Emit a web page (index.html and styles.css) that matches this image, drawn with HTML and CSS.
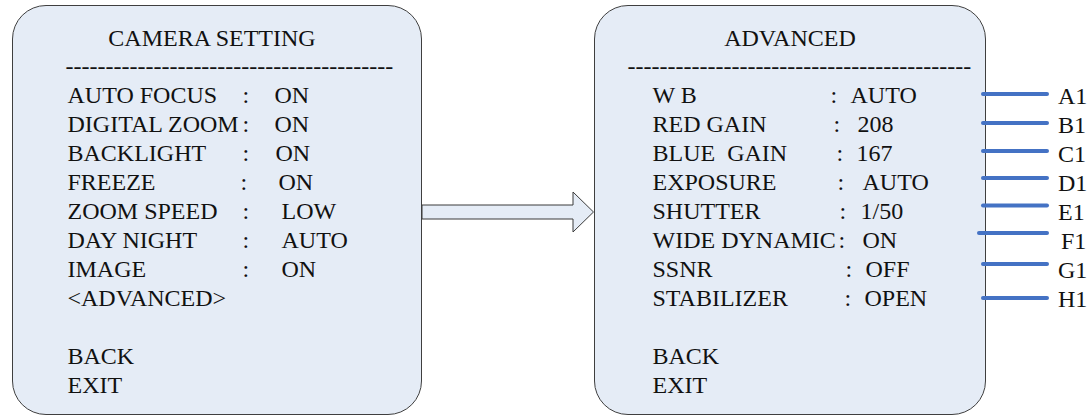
FILE: index.html
```html
<!DOCTYPE html>
<html>
<head>
  <title>Camera Setting Menu</title>
  <link rel="stylesheet" href="styles.css">
</head>
<body>
  <div id="diagram">
    <div class="menu menu-camera">
      <div class="menu-title">CAMERA SETTING</div>
      <div class="menu-rule">-----------------------------------------</div>
      <div class="menu-list">
        <div class="row"><span class="key">AUTO FOCUS</span><span class="sep">:</span><span class="val">ON</span></div>
        <div class="row"><span class="key">DIGITAL ZOOM</span><span class="sep">:</span><span class="val">ON</span></div>
        <div class="row"><span class="key">BACKLIGHT</span><span class="sep">:</span><span class="val">ON</span></div>
        <div class="row"><span class="key">FREEZE</span><span class="sep">:</span><span class="val">ON</span></div>
        <div class="row"><span class="key">ZOOM SPEED</span><span class="sep">:</span><span class="val">LOW</span></div>
        <div class="row"><span class="key">DAY NIGHT</span><span class="sep">:</span><span class="val">AUTO</span></div>
        <div class="row"><span class="key">IMAGE</span><span class="sep">:</span><span class="val">ON</span></div>
        <div class="row"><span class="key">&lt;ADVANCED&gt;</span></div>
        <div class="row blank"></div>
        <div class="row"><span class="key">BACK</span></div>
        <div class="row"><span class="key">EXIT</span></div>
      </div>
    </div>

    <svg class="arrow" width="172" height="44" viewBox="0 0 172 44">
      <polygon points="0,15 151,15 151,2 171.5,22 151,42 151,29 0,29" fill="#e5ecf6" stroke="#3a3a3a" stroke-width="1"/>
    </svg>

    <div class="menu menu-advanced">
      <div class="menu-title">ADVANCED</div>
      <div class="menu-rule">-------------------------------------------</div>
      <div class="menu-list">
        <div class="row"><span class="key">W B</span><span class="sep">:</span><span class="val">AUTO</span></div>
        <div class="row"><span class="key">RED GAIN</span><span class="sep">:</span><span class="val">208</span></div>
        <div class="row"><span class="key">BLUE&nbsp; GAIN</span><span class="sep">:</span><span class="val">167</span></div>
        <div class="row"><span class="key">EXPOSURE</span><span class="sep">:</span><span class="val">AUTO</span></div>
        <div class="row"><span class="key">SHUTTER</span><span class="sep">:</span><span class="val">1/50</span></div>
        <div class="row"><span class="key">WIDE DYNAMIC</span><span class="sep">:</span><span class="val">ON</span></div>
        <div class="row"><span class="key">SSNR</span><span class="sep">:</span><span class="val">OFF</span></div>
        <div class="row"><span class="key">STABILIZER</span><span class="sep">:</span><span class="val">OPEN</span></div>
        <div class="row blank"></div>
        <div class="row"><span class="key">BACK</span></div>
        <div class="row"><span class="key">EXIT</span></div>
      </div>
    </div>

    <div class="callouts">
      <div class="callout"><span class="lead"></span><span class="tag">A1</span></div>
      <div class="callout"><span class="lead"></span><span class="tag">B1</span></div>
      <div class="callout"><span class="lead"></span><span class="tag">C1</span></div>
      <div class="callout"><span class="lead"></span><span class="tag">D1</span></div>
      <div class="callout"><span class="lead"></span><span class="tag">E1</span></div>
      <div class="callout"><span class="lead"></span><span class="tag">F1</span></div>
      <div class="callout"><span class="lead"></span><span class="tag">G1</span></div>
      <div class="callout"><span class="lead"></span><span class="tag">H1</span></div>
    </div>
  </div>
</body>
</html>
```

FILE: styles.css
```css
/* OSD menu diagram */
body {
  margin: 0;
  background-color: #fff;
  color: #111;
  font-family: "Liberation Serif", "Times New Roman", serif;
  font-size: 24px;
}

#diagram {
  display: flex;
  align-items: flex-start;
  padding: 5px 0 0 12px;
}

.menu {
  flex: none;
  box-sizing: border-box;
  height: 410px;
  padding-top: 17.5px;
  border: 1.5px solid #3f3f3f;
  border-radius: 34px;
  background-color: #e5ecf6;
}

.menu-camera {
  width: 410px;
}

.menu-advanced {
  width: 392px;
}

.menu-title {
  line-height: 28px;
  text-align: center;
  white-space: nowrap;
}

.menu-camera .menu-title {
  padding-right: 10px;
}

.menu-rule {
  line-height: 28px;
  white-space: nowrap;
}

.menu-camera .menu-rule {
  padding-left: 52.5px;
}

.menu-advanced .menu-rule {
  padding-left: 32.5px;
}

.menu-list {
  margin-top: 1.5px;
}

.row {
  display: flex;
  height: 29px;
  line-height: 29px;
  white-space: nowrap;
}

.key {
  flex: none;
}

.sep {
  flex: none;
}

/* left menu columns */
.menu-camera .row {
  padding-left: 54.5px;
}

.menu-camera .key {
  width: 175px;
}

.menu-camera .sep {
  width: 32px;
}

.menu-camera .row:nth-child(3) .val { padding-left: 1px; }
.menu-camera .row:nth-child(4) .sep { margin-left: -2px; margin-right: 2px; }
.menu-camera .row:nth-child(4) .val { padding-left: 4px; }
.menu-camera .row:nth-child(5) .val,
.menu-camera .row:nth-child(6) .val,
.menu-camera .row:nth-child(7) .val { padding-left: 7px; }

/* right menu columns */
.menu-advanced .row {
  padding-left: 57.5px;
}

.menu-advanced .key {
  width: 178px;
}

.menu-advanced .sep {
  width: 20px;
}

.menu-advanced .row:nth-child(2) .sep { padding-left: 3px; }
.menu-advanced .row:nth-child(2) .val { padding-left: 4px; }
.menu-advanced .row:nth-child(3) .sep { padding-left: 6px; }
.menu-advanced .row:nth-child(4) .sep { padding-left: 7px; }
.menu-advanced .row:nth-child(4) .val { padding-left: 5px; }
.menu-advanced .row:nth-child(5) .sep { padding-left: 9px; }
.menu-advanced .row:nth-child(5) .val { padding-left: 1px; }
.menu-advanced .row:nth-child(6) .sep { padding-left: 8px; }
.menu-advanced .row:nth-child(6) .val { padding-left: 4px; }
.menu-advanced .row:nth-child(7) .sep { padding-left: 15px; }
.menu-advanced .row:nth-child(8) .sep { padding-left: 14px; }

.arrow {
  flex: none;
  display: block;
  margin-top: 185px;
}

/* callout leaders on the right */
.callouts {
  flex: none;
  margin-left: -5px;
  padding-top: 76.5px;
}

.callout {
  display: flex;
  align-items: center;
  height: 29px;
  line-height: 29px;
}

.lead {
  width: 68px;
  height: 4px;
  border-radius: 2px;
  background-color: #4472c4;
}

.tag {
  margin-left: 9px;
}

.callout:nth-child(1) .lead { transform: translateY(-2px); }
.callout:nth-child(2) .lead { transform: translateY(-2px); }
.callout:nth-child(3) .lead { transform: translateY(-3px); }
.callout:nth-child(4) .lead { transform: translateY(-5px); }
.callout:nth-child(5) .lead { transform: translateY(-6.5px); }
.callout:nth-child(6) .lead { transform: translateY(-8px); width: 72px; margin-left: -4px; }
.callout:nth-child(6) .tag { margin-left: 12px; }
.callout:nth-child(7) .lead { transform: translateY(-6px); }
.callout:nth-child(8) .lead { transform: translateY(-1px); }
```
